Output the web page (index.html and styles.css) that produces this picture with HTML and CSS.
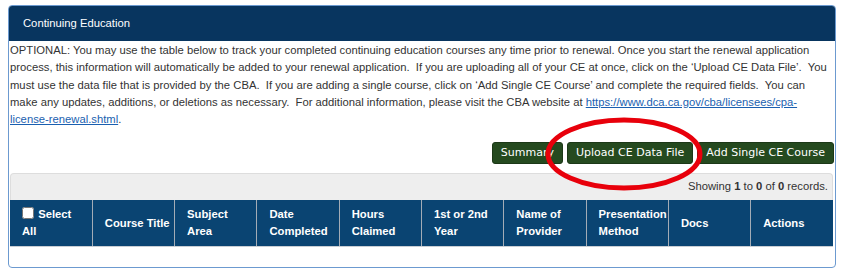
FILE: index.html
```html
<!DOCTYPE html>
<html lang="en">
<head>
  <meta charset="UTF-8" />
  <title>Continuing Education</title>
  <link rel="stylesheet" href="styles.css">
</head>
<body>

<div class="panel">
  <div class="panel-heading">Continuing Education</div>
  <div class="panel-body">
    <p class="intro">OPTIONAL: You may use the table below to track your completed continuing education courses any time prior to renewal. Once you start the renewal application process, this information will automatically be added to your renewal application.&nbsp; If you are uploading all of your CE at once, click on the &lsquo;Upload CE Data File&rsquo;.&nbsp; You must use the data file that is provided by the CBA.&nbsp; If you are adding a single course, click on &lsquo;Add Single CE Course&rsquo; and complete the required fields.&nbsp; You can make any updates, additions, or deletions as necessary.&nbsp; For additional information, please visit the CBA website at <a href="#">https://www.dca.ca.gov/cba/licensees/cpa-license-renewal.shtml</a>.</p>

    <div class="actions">
      <button class="btn">Summary</button>
      <button class="btn">Upload CE Data File</button>
      <button class="btn">Add Single CE Course</button>
    </div>

    <div class="grid">
      <div class="grid-info">Showing <b>1</b> to <b>0</b> of <b>0</b> records.</div>
      <table>
        <thead>
          <tr>
            <th class="select-col"><input type="checkbox" class="check" /> Select All</th>
            <th>Course Title</th>
            <th>Subject Area</th>
            <th>Date Completed</th>
            <th>Hours Claimed</th>
            <th>1st or 2nd Year</th>
            <th>Name of Provider</th>
            <th>Presentation Method</th>
            <th>Docs</th>
            <th>Actions</th>
          </tr>
        </thead>
        <tbody></tbody>
      </table>
    </div>
  </div>
</div>

<svg class="callout" width="164" height="78" viewBox="0 0 164 78">
  <ellipse cx="82" cy="39" rx="76" ry="34" fill="none" stroke="#e8000b" stroke-width="5" />
</svg>

</body>
</html>
```

FILE: styles.css
```css
body {
  margin: 0;
  padding: 5px 7px 0 8px;
  font-family: "Liberation Sans", Arial, sans-serif;
  font-size: 11.25px;
  color: #333;
  background: #fff;
}

.panel {
  border: 1px solid #6c9ad0;
  border-radius: 4px;
  overflow: hidden;
}

.panel-heading {
  background: #08355f;
  color: #fff;
  padding: 9px 14px;
  line-height: 17px;
}

.panel-body {
  padding: 1px 1px 20px;
}

.intro {
  margin: 0;
  line-height: 17.3px;
}

.intro a {
  color: #1a5fb0;
}

.actions {
  display: flex;
  justify-content: flex-end;
  gap: 4px;
  margin-top: 14px;
}

.btn {
  font-family: "DejaVu Sans", Verdana, sans-serif;
  font-size: 11px;
  color: #fff;
  background: #254a1f;
  border: 1px solid #1c3817;
  border-radius: 3px;
  padding: 3px 8px;
  line-height: 14px;
  cursor: pointer;
}

.grid {
  margin: 9px 1px 0 0;
}

.grid-info {
  background: #eee;
  border: 1px solid #ddd;
  border-bottom: none;
  border-radius: 4px 4px 0 0;
  text-align: right;
  padding: 4px 4px 5px;
  height: 17px;
  line-height: 17px;
}

table {
  width: 100%;
  border-collapse: collapse;
  table-layout: fixed;
}

th {
  background: #0a4472;
  color: #fff;
  font-weight: bold;
  text-align: left;
  vertical-align: middle;
  padding: 6px 2px 6px 12px;
  line-height: 17px;
  border-left: 1px solid #a3acb6;
  border-bottom: 1px solid #c9ced4;
}

th:first-child {
  border-left: none;
}

.select-col {
  padding-right: 10px;
}

.check {
  margin: 0 1px 0 0;
  width: 12px;
  height: 12px;
  vertical-align: -1px;
}

.callout {
  position: absolute;
  left: 542px;
  top: 115px;
}
```
